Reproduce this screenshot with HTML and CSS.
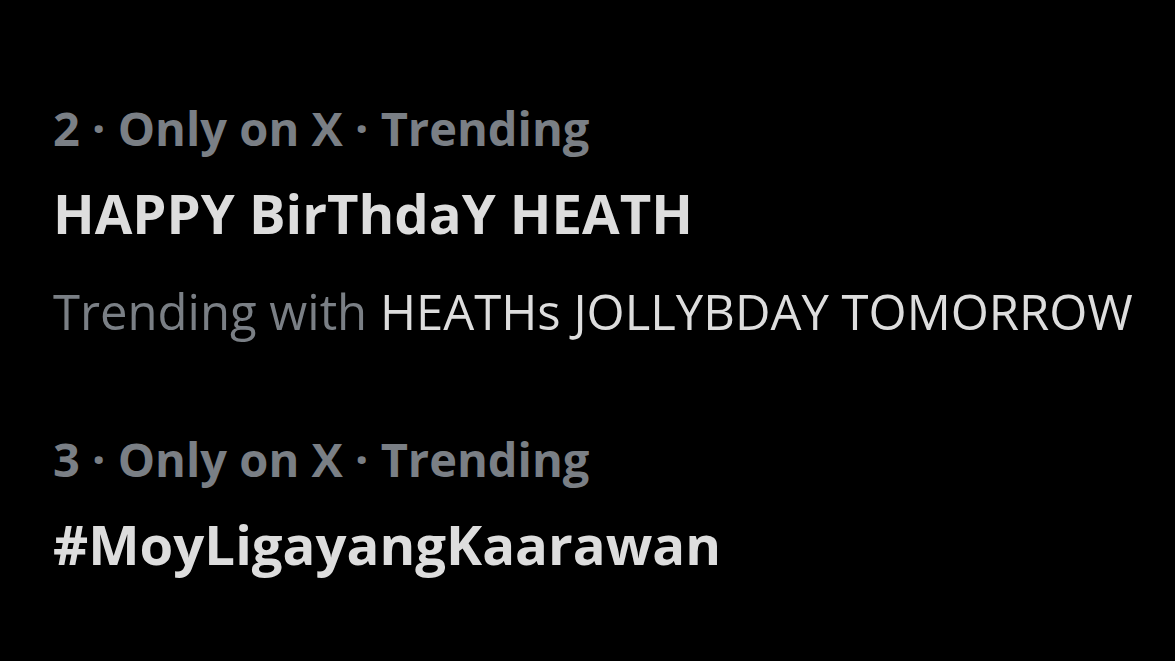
FILE: index.html
```html
<!DOCTYPE html>
<html>
<head>
<meta charset="utf-8">
<link rel="stylesheet" href="styles.css">
</head>
<body>
<main class="list">
  <section class="trend">
    <div class="meta">2 · Only on X · Trending</div>
    <div class="title">HAPPY BirThdaY HEATH</div>
    <div class="with"><span class="muted">Trending with</span> HEATHs JOLLYBDAY TOMORROW</div>
  </section>
  <section class="trend">
    <div class="meta">3 · Only on X · Trending</div>
    <div class="title">#MoyLigayangKaarawan</div>
  </section>
</main>
</body>
</html>
```
FILE: styles.css
```css
html, body {
  margin: 0;
  background: #000;
  height: 100%;
}
body {
  font-family: "Open Sans", "Liberation Sans", sans-serif;
  overflow: hidden;
}
.list {
  padding: 98px 0 0 53px;
  display: flex;
  flex-direction: column;
  gap: 83px;
}
.trend {
  display: flex;
  flex-direction: column;
}
.meta {
  color: #7a7f85;
  font-weight: 700;
  font-size: 47px;
  line-height: 60px;
}
.title {
  color: #dddddd;
  font-weight: 700;
  font-size: 54.5px;
  line-height: 70px;
  margin-top: 20px;
}
.with {
  color: #dddddd;
  font-weight: 400;
  font-size: 49px;
  line-height: 70px;
  margin-top: 28px;
}
.muted {
  color: #7a7f85;
}
```
